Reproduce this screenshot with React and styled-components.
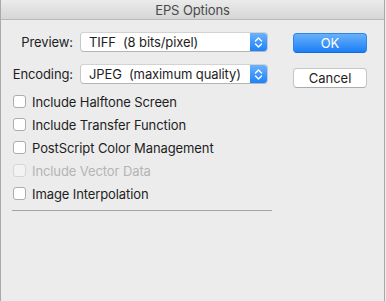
import React from "react";
import styled, { createGlobalStyle } from "styled-components";

const GlobalStyle = createGlobalStyle`
  html, body {
    margin: 0;
    padding: 0;
    background: #ececec;
  }
  body {
    font-family: Inter, "Liberation Sans", Arial, sans-serif;
    -webkit-font-smoothing: antialiased;
  }
`;

const Window = styled.div`
  display: flex;
  flex-direction: column;
  width: 385px;
  height: 301px;
  box-sizing: border-box;
  border-left: 1px solid #a9a9a9;
  border-right: 1px solid #a9a9a9;
  background: #ececec;
  color: #1e1e1e;
  font-size: 13px;
  letter-spacing: -0.1px;
`;

const TitleBar = styled.div`
  display: flex;
  align-items: center;
  justify-content: center;
  height: 19px;
  flex: none;
  background: linear-gradient(#ebebeb, #d6d6d6);
  border-bottom: 1px solid #b9b9b9;
  color: #4a4a4a;
  font-size: 13px;
`;

const Body = styled.div`
  display: flex;
  flex-direction: row;
  padding: 12px 17px 0 11px;
  gap: 21px;
`;

const Form = styled.div`
  display: flex;
  flex-direction: column;
  width: 260px;
`;

const FieldGrid = styled.div`
  display: grid;
  grid-template-columns: 61px 188px;
  column-gap: 7px;
  row-gap: 12px;
  align-items: center;
  padding-bottom: 6px;
`;

const Label = styled.label`
  text-align: right;
  white-space: nowrap;
`;

const Popup = styled.div`
  display: flex;
  align-items: center;
  height: 20px;
  box-sizing: border-box;
  background: #fff;
  border: 1px solid #c8c8c8;
  border-top-color: #d2d2d2;
  border-bottom-color: #b4b4b4;
  border-radius: 4px;
  overflow: hidden;
`;

const PopupText = styled.span`
  flex: 1;
  padding-left: 8px;
  white-space: pre;
`;

const Stepper = styled.div`
  display: flex;
  align-items: center;
  justify-content: center;
  width: 17px;
  height: 100%;
  background: linear-gradient(#6cb3fa, #1a82fb);
`;

const CheckRow = styled.label`
  display: flex;
  align-items: center;
  gap: 6px;
  height: 23px;
  color: ${(p) => (p.disabled ? "#b4b4b4" : "#1e1e1e")};
  white-space: nowrap;
`;

const Box = styled.span`
  width: 13px;
  height: 13px;
  box-sizing: border-box;
  border-radius: 3px;
  background: ${(p) => (p.disabled ? "#f3f3f3" : "#fff")};
  border: 1px solid ${(p) => (p.disabled ? "#d6d6d6" : "#acacac")};
  margin-left: 1px;
`;

const Separator = styled.div`
  height: 1px;
  width: 260px;
  background: #a3a3a3;
  margin-top: 5px;
`;

const Buttons = styled.div`
  display: flex;
  flex-direction: column;
  gap: 15px;
  padding-top: 1px;
`;

const Button = styled.button`
  width: 74px;
  height: 20px;
  box-sizing: border-box;
  border-radius: 4px;
  font-family: inherit;
  font-size: 13px;
  padding: 0;
  border: 1px solid ${(p) => (p.primary ? "#2d86f0" : "#c6c6c6")};
  border-bottom-color: ${(p) => (p.primary ? "#1769d6" : "#adadad")};
  background: ${(p) =>
    p.primary ? "linear-gradient(#6ab0fa, #1b7ff6)" : "#fff"};
  color: ${(p) => (p.primary ? "#fff" : "#1e1e1e")};
`;

function Chevrons() {
  return (
    <svg width="9" height="13" viewBox="0 0 9 13">
      <path
        d="M1.5 5 L4.5 2 L7.5 5 M1.5 8 L4.5 11 L7.5 8"
        fill="none"
        stroke="#fff"
        strokeWidth="1.4"
        strokeLinecap="round"
        strokeLinejoin="round"
      />
    </svg>
  );
}

const checks = [
  { label: "Include Halftone Screen" },
  { label: "Include Transfer Function" },
  { label: "PostScript Color Management" },
  { label: "Include Vector Data", disabled: true },
  { label: "Image Interpolation" },
];

export default function App() {
  return (
    <>
      <GlobalStyle />
      <Window>
        <TitleBar>EPS Options</TitleBar>
        <Body>
          <Form>
            <FieldGrid>
              <Label>Preview:</Label>
              <Popup>
                <PopupText>TIFF  (8 bits/pixel)</PopupText>
                <Stepper>
                  <Chevrons />
                </Stepper>
              </Popup>
              <Label>Encoding:</Label>
              <Popup>
                <PopupText>JPEG  (maximum quality)</PopupText>
                <Stepper>
                  <Chevrons />
                </Stepper>
              </Popup>
            </FieldGrid>
            {checks.map((c) => (
              <CheckRow key={c.label} disabled={c.disabled}>
                <Box disabled={c.disabled} />
                {c.label}
              </CheckRow>
            ))}
            <Separator />
          </Form>
          <Buttons>
            <Button primary>OK</Button>
            <Button>Cancel</Button>
          </Buttons>
        </Body>
      </Window>
    </>
  );
}
